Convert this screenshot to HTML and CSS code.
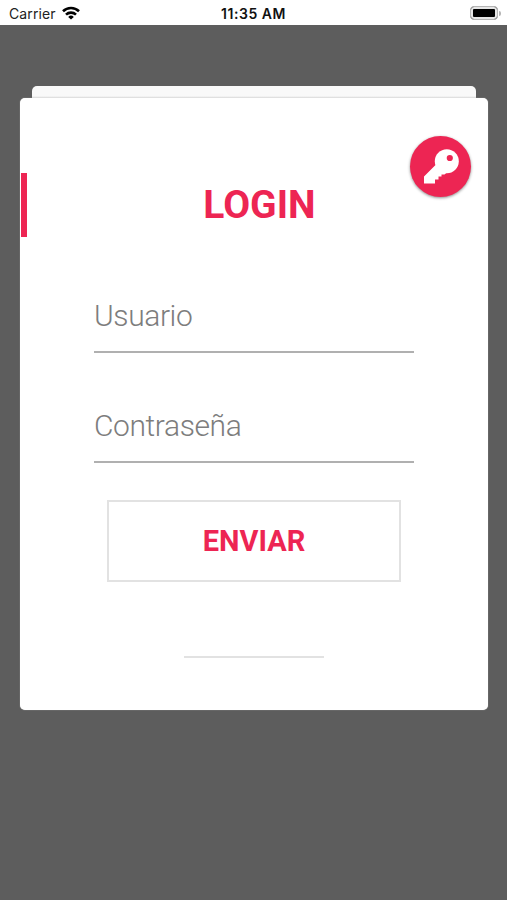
FILE: index.html
```
<!DOCTYPE html>
<html lang="es">
<head>
  <meta charset="UTF-8">
  <meta name="viewport" content="width=device-width, initial-scale=1.0">
  <title>Login</title>
  <link rel="stylesheet" href="styles.css">
</head>
<body>
  <header class="status-bar">
    <div class="carrier">
      <span>Carrier</span>
      <svg class="wifi" viewBox="0 0 18 14" fill="none" stroke="#000" stroke-width="2.6">
        <path d="M1 5.200a11.500 11.500 0 0 1 16 0"/>
        <path d="M4 8.600a7.200 7.200 0 0 1 10 0"/>
        <path d="M9 13.600L6.200 10.900a4 4 0 0 1 5.600 0z" fill="#000" stroke="none"/>
      </svg>
    </div>
    <span class="time">11:35 AM</span>
    <div class="battery">
      <div class="battery-body"></div>
      <div class="battery-tip"></div>
    </div>
  </header>

  <main class="container">
    <div class="card-back"></div>
    <div class="card">
      <button class="key-button" type="button" aria-label="Registro">
        <svg class="key" viewBox="0 0 36 36">
          <path fill="#fff" d="M1 34.500V27.500L12.500 16L24 23.500L21.500 25.500H18.500V27.500H15.500V30.500H12V34.500z"/>
          <circle cx="23.800" cy="12.300" r="12" fill="#fff"/>
          <circle cx="26.800" cy="9" r="3.100" fill="#ed2553"/>
        </svg>
      </button>
      <h1 class="title">LOGIN</h1>
      <form class="form">
        <input class="field" type="text" placeholder="Usuario">
        <input class="field" type="password" placeholder="Contraseña">
        <button class="submit" type="button">ENVIAR</button>
      </form>
      <div class="divider"></div>
    </div>
  </main>
</body>
</html>
```

FILE: styles.css
```
* {
  box-sizing: border-box;
}

body {
  margin: 0;
  height: 900px;
  overflow: hidden;
  background-color: #5d5d5d;
  font-family: Roboto, sans-serif;
}

.status-bar {
  display: grid;
  grid-template-columns: 1fr auto 1fr;
  align-items: center;
  height: 25px;
  padding: 1px 6px 0 9px;
  background-color: #fff;
  font-family: Inter, sans-serif;
  font-size: 14px;
  color: #222;
}

.carrier {
  display: flex;
  align-items: center;
  gap: 6px;
  letter-spacing: 0.1px;
}

.wifi {
  width: 18px;
  height: 14px;
}

.time {
  margin-right: 3px;
  font-weight: 600;
  letter-spacing: 0.55px;
  color: #111;
}

.battery {
  display: flex;
  justify-content: flex-end;
  align-items: center;
  gap: 1px;
}

.battery-body {
  width: 28px;
  height: 14px;
  border: 1px solid #b5b5b5;
  border-radius: 4px;
  background-color: #000;
  box-shadow: inset 0 0 0 2px #e6e6e6;
}

.battery-tip {
  width: 2px;
  height: 5px;
  border-radius: 0 2px 2px 0;
  background-color: #b5b5b5;
}

.container {
  padding: 61px 19px 0 20px;
}

.card-back {
  height: 12px;
  margin: 0 12px;
  border-radius: 5px 5px 0 0;
  background: linear-gradient(#f9f9f9 10px, #dcdcdc);
}

.card {
  position: relative;
  height: 612px;
  padding-top: 87px;
  border-radius: 5px;
  background-color: #fff;
  box-shadow: 0 0 1px #ccc;
}

.card::before {
  content: '';
  position: absolute;
  left: 1px;
  top: 75px;
  width: 6px;
  height: 64px;
  background-color: #ed2553;
}

.key-button {
  position: absolute;
  top: 38px;
  right: 17px;
  display: flex;
  align-items: center;
  justify-content: center;
  width: 61px;
  height: 61px;
  padding: 0;
  border: none;
  border-radius: 50%;
  background-color: #ed2553;
  box-shadow: 0 1px 3px rgba(0, 0, 0, 0.45);
}

.key {
  width: 36px;
  height: 36px;
}

.title {
  margin: 0;
  padding-left: 11px;
  font-size: 39px;
  font-weight: 700;
  line-height: 40px;
  text-align: center;
  color: #ed2553;
}

.form {
  display: flex;
  flex-direction: column;
  margin: 53px 74px 0;
}

.field {
  height: 75px;
  margin-bottom: 35px;
  padding: 1px 0 0;
  border: none;
  border-bottom: 2px solid #b0b0b0;
  outline: none;
  font-family: Roboto, sans-serif;
  font-size: 30px;
  font-weight: 300;
  letter-spacing: -0.4px;
}

.field::placeholder {
  color: #7d7d7d;
}

.submit {
  height: 82px;
  margin: 2px 13px 0;
  padding: 0 0 1px;
  border: 2px solid #e2e2e2;
  background-color: #fff;
  font-family: Roboto, sans-serif;
  font-size: 29px;
  font-weight: 700;
  color: #ed2553;
}

.divider {
  width: 140px;
  height: 2px;
  margin: 74px auto 0;
  background-color: #e2e2e2;
}
```
